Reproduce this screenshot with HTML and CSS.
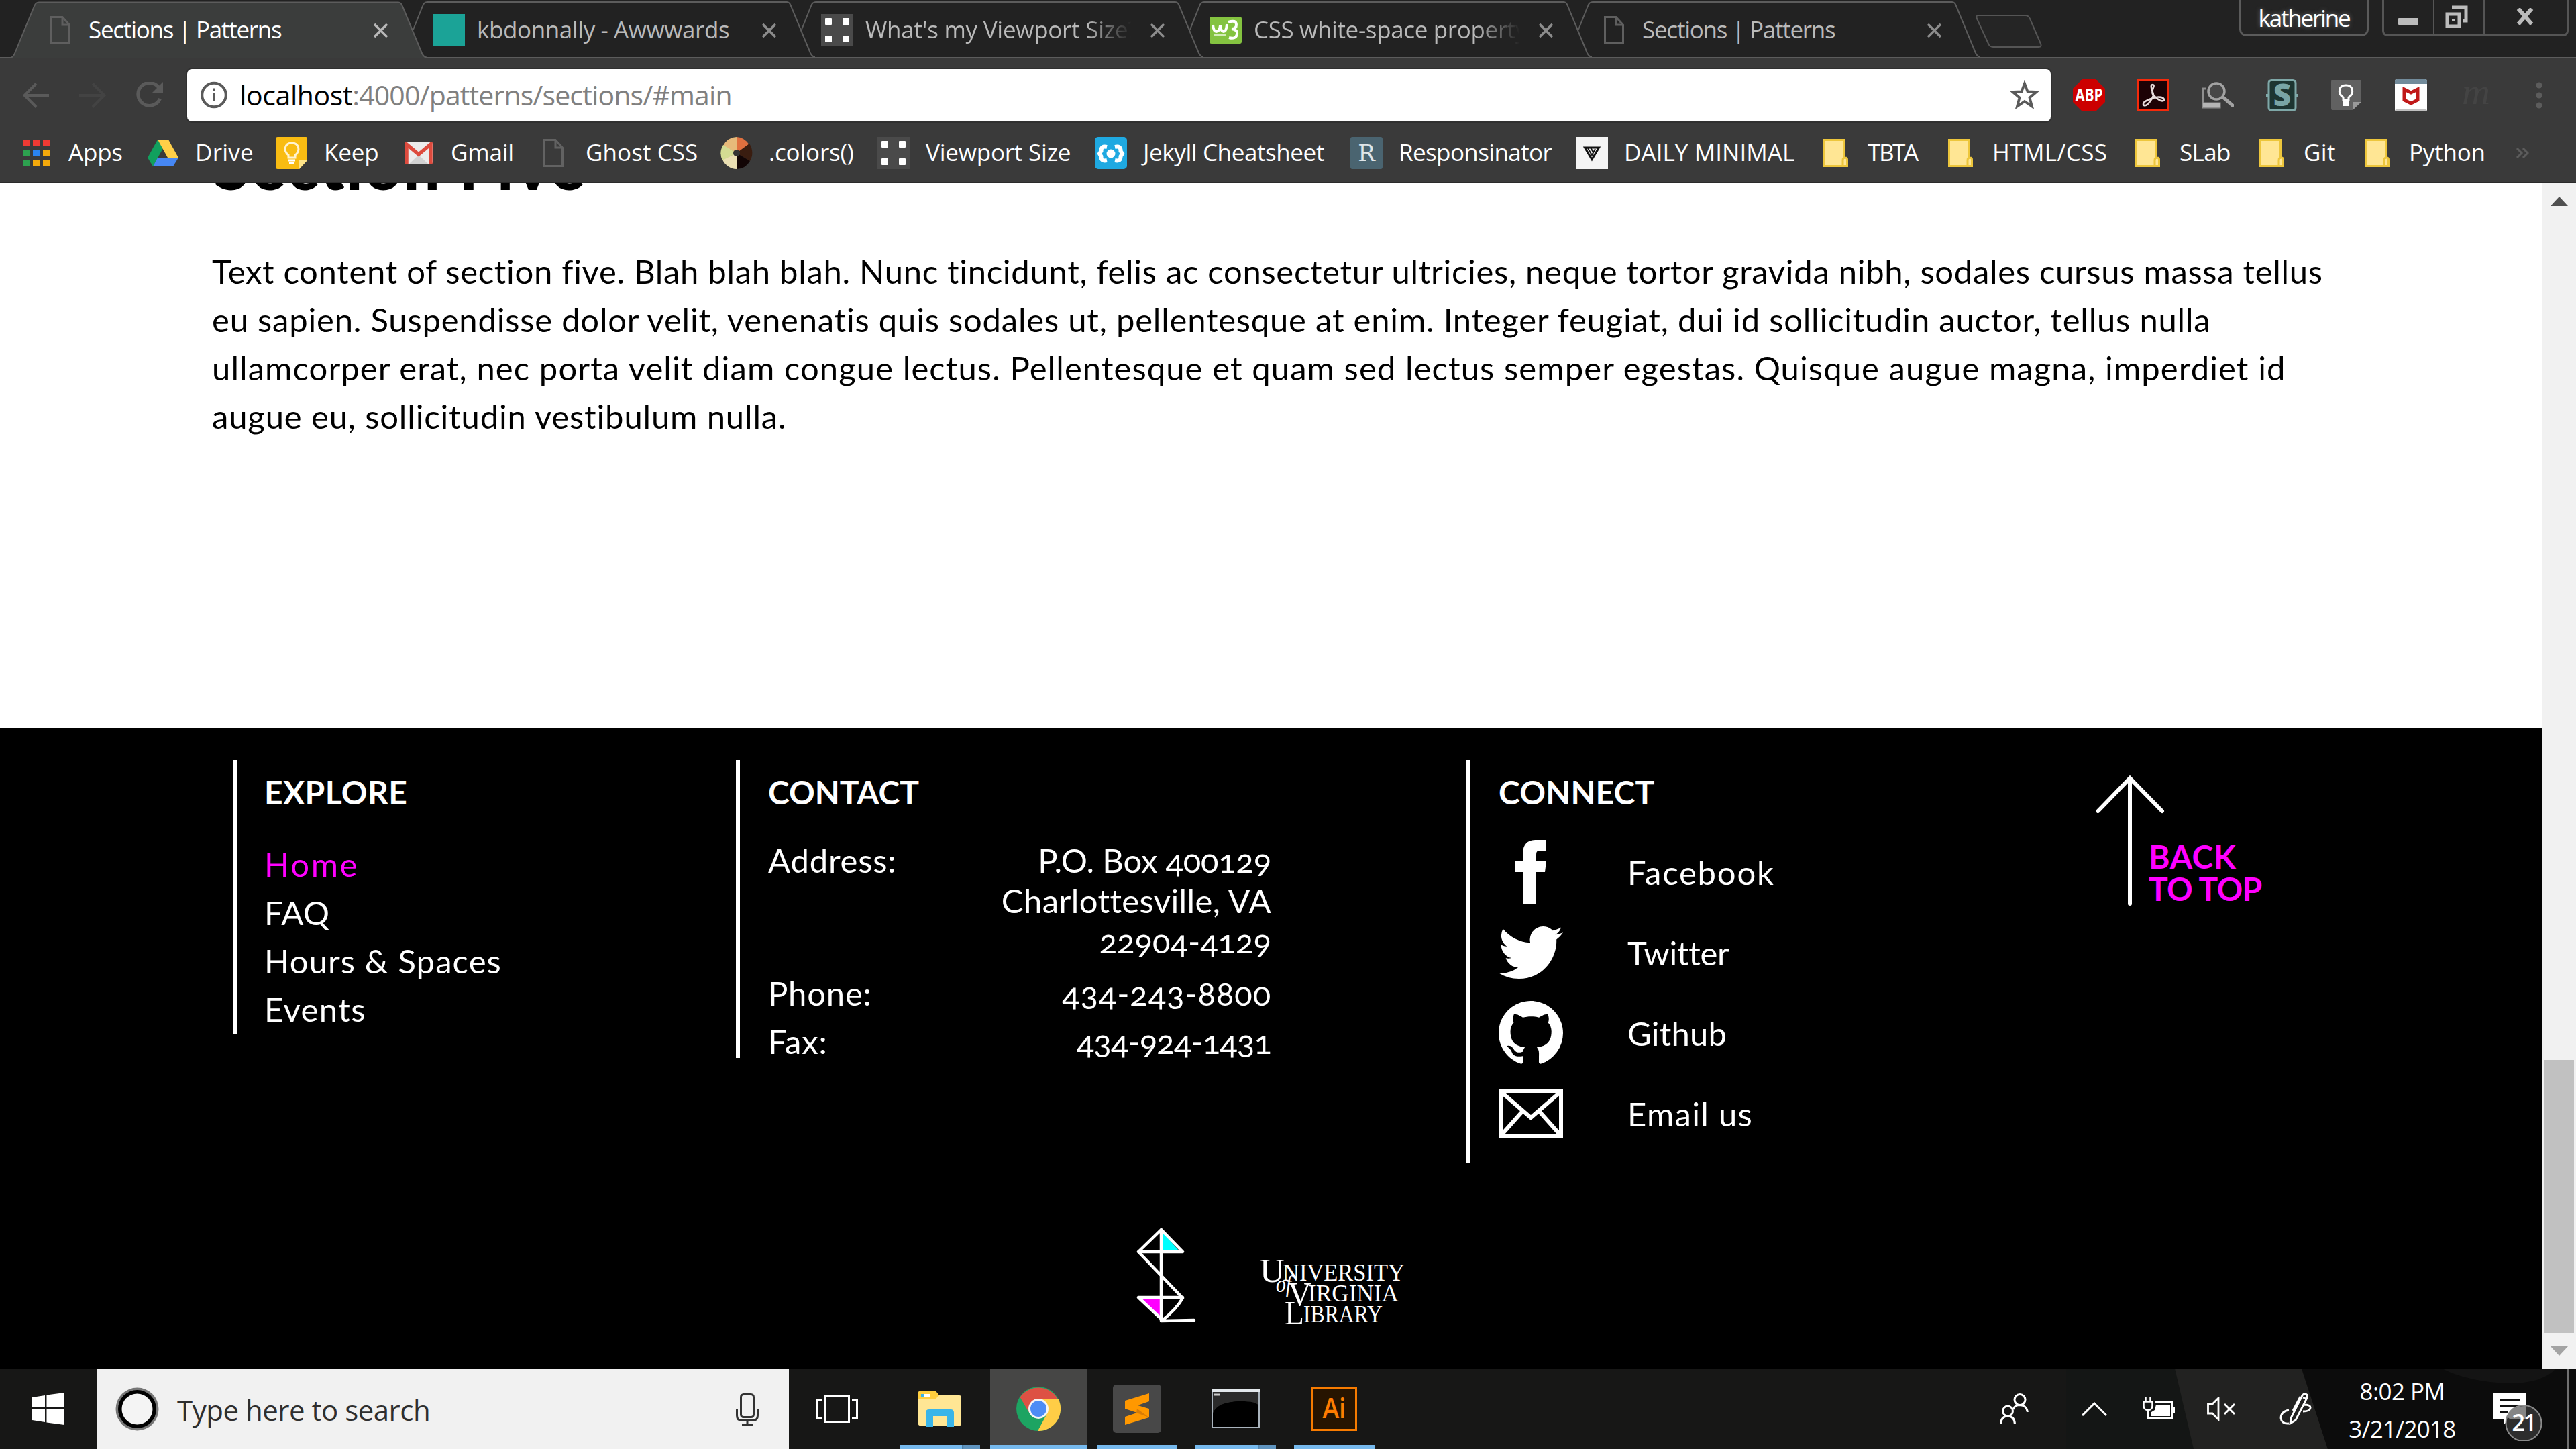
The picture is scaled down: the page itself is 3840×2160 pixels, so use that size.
FILE: index.html
```html
<!DOCTYPE html>
<html lang="en">
<head>
<meta charset="utf-8">
<title>Sections | Patterns</title>
<link rel="stylesheet" href="styles.css">
</head>
<body>
<svg class="defs" width="0" height="0">
  <symbol id="file" viewBox="0 0 30 42"><path d="M1.5 1.5H18L28.5 13V40.500H1.500ZM18 1.500V13H28.500" fill="none" stroke="currentColor" stroke-width="3"/></symbol>
  <symbol id="close" viewBox="0 0 23 23"><path d="M2 2L21 21M21 2L2 21" fill="none" stroke="currentColor" stroke-width="3.600"/></symbol>
  <symbol id="folder" viewBox="0 0 37 42"><path d="M1.500 1.500H31.500V28H33Q35.500 28 35.500 31V40.500H1.500Z" fill="#ffe694" stroke="#edc63c" stroke-width="3"/><path d="M29 40V32Q29 28 32 28" fill="none" stroke="#edc63c" stroke-width="3"/></symbol>
  <symbol id="viewport" viewBox="0 0 48 48"><rect width="48" height="48" fill="#4a4a4a"/><g fill="#fff"><rect x="6" y="6" width="10" height="10" rx="1"/><rect x="32" y="6" width="10" height="10" rx="1"/><rect x="6" y="32" width="10" height="10" rx="1"/><rect x="32" y="32" width="10" height="10" rx="1"/></g></symbol>
  <symbol id="tab" viewBox="0 0 619 86"><path d="M20 44L34 9Q36 3 41 3H577Q581 3 583 9L612 79Q615 85 619 85" fill="none" stroke="#5c5c5c" stroke-width="2"/></symbol>
  <symbol id="tab-active" viewBox="0 0 619 86"><path d="M0 86Q3 84 5 79L34 9Q36 3 41 3H577Q581 3 583 9L612 79Q615 86 619 86Z" fill="#3b3d3c"/><path d="M0 85Q3 84 5 79L34 9Q36 3 41 3H577Q581 3 583 9L612 79Q615 85 619 85" fill="none" stroke="#5c5c5c" stroke-width="2"/></symbol>
</svg>

<header class="chrome">
  <div class="tabs">
    <div class="tab tab--active"><svg class="tab__shape"><use href="#tab-active"/></svg><span class="slot"><svg width="30" height="42"><use href="#file"/></svg></span><span class="tab__title">Sections | Patterns</span><svg class="tab__close" width="23" height="23"><use href="#close"/></svg></div>
    <div class="tab"><svg class="tab__shape"><use href="#tab"/></svg><span class="slot slot--teal"></span><span class="tab__title">kbdonnally - Awwwards</span><svg class="tab__close" width="23" height="23"><use href="#close"/></svg></div>
    <div class="tab"><svg class="tab__shape"><use href="#tab"/></svg><span class="slot"><svg width="48" height="48"><use href="#viewport"/></svg></span><span class="tab__title tab__title--fade">What's my Viewport Size?</span><svg class="tab__close" width="23" height="23"><use href="#close"/></svg></div>
    <div class="tab"><svg class="tab__shape"><use href="#tab"/></svg><span class="slot"><svg width="48" height="40" viewBox="0 0 48 40"><rect width="48" height="40" rx="3" fill="#84c340"/><path d="M5 12Q6 22 10 22Q15 22 16 13Q17 22 21 22Q25 22 26 11M28 8Q40 4 40 12Q40 18 33 18Q42 19 41 26Q39 34 29 31" fill="none" stroke="#fff" stroke-width="4"/><path d="M7 27H25" stroke="#d4ecb9" stroke-width="3" stroke-dasharray="2 1"/></svg></span><span class="tab__title tab__title--fade">CSS white-space property</span><svg class="tab__close" width="23" height="23"><use href="#close"/></svg></div>
    <div class="tab"><svg class="tab__shape"><use href="#tab"/></svg><span class="slot"><svg width="30" height="42"><use href="#file"/></svg></span><span class="tab__title">Sections | Patterns</span><svg class="tab__close" width="23" height="23"><use href="#close"/></svg></div>
    <svg class="newtab" width="99" height="50" viewBox="0 0 99 50"><path d="M4 1H74Q79 1 81 6L97 43Q99 48 94 48H26Q21 48 19 43L2 6Q0 1 4 1Z" fill="#252525" stroke="#555" stroke-width="2"/></svg>
    <div class="profile">katherine</div>
    <div class="controls">
      <span class="controls__btn"><svg width="30" height="10"><rect width="30" height="10" rx="1" fill="#bcbcbc"/></svg></span>
      <span class="controls__btn"><svg width="34" height="34" viewBox="0 0 34 34"><path d="M10 3H31V23H27" fill="none" stroke="#bcbcbc" stroke-width="5"/><rect x="3" y="13" width="18" height="18" fill="none" stroke="#bcbcbc" stroke-width="5"/><rect x="10" y="20" width="4" height="4" fill="#bcbcbc"/></svg></span>
      <span class="controls__btn"><svg width="28" height="25" viewBox="0 0 28 25"><path d="M4 1L24 24M24 1L4 24" stroke="#bcbcbc" stroke-width="6"/></svg></span>
    </div>
  </div>

  <div class="toolbar">
    <svg class="nav-back" width="40" height="38" viewBox="0 0 40 38"><path d="M39 19H3M20 1.500L2.500 19L20 36.500" fill="none" stroke="#5a5a5a" stroke-width="4"/></svg>
    <svg class="nav-fwd" width="40" height="38" viewBox="0 0 40 38"><path d="M0 19H37M20 1.500L37.500 19L20 36.500" fill="none" stroke="#434343" stroke-width="4"/></svg>
    <svg class="nav-reload" width="41" height="40" viewBox="0 0 41 40"><path d="M35 9A17 17 0 1 0 36.500 25" fill="none" stroke="#5a5a5a" stroke-width="5"/><path d="M41 0V17H24Z" fill="#5a5a5a"/></svg>
    <div class="address">
      <svg width="40" height="41" viewBox="0 0 40 41"><circle cx="20" cy="20.500" r="17.800" fill="none" stroke="#5a5a5a" stroke-width="4"/><path d="M20 17.500V30M20 10.500V14.500" stroke="#5a5a5a" stroke-width="4"/></svg>
      <span class="address__url"><span class="address__host">localhost</span>:4000/patterns/sections/#main</span>
      <svg width="44" height="43" viewBox="0 0 44 43"><path d="M22 4.500L26.500 16.500L39.500 17L29.500 25.500L33 38.500L22 31L11 38.500L14.500 25.500L4.500 17L17.500 16.500Z" fill="none" stroke="#5a5a5a" stroke-width="3.800"/></svg>
    </div>
    <div class="extensions">
      <svg width="48" height="48" viewBox="0 0 48 48"><path d="M14 0H34L48 14V34L34 48H14L0 34V14Z" fill="#c00"/><text x="24" y="33" class="ic ic--abp" textLength="41" lengthAdjust="spacingAndGlyphs">ABP</text></svg>
      <svg width="48" height="48" viewBox="0 0 48 48"><rect x="1.500" y="1.500" width="45" height="45" fill="#1d0205" stroke="#f62a0b" stroke-width="3"/><path d="M23 8C17 8 25 22 24 24C22 31 14 41 10 39C6 35 14 31 24 28C32 25 41 27 40 31C37 35 28 29 23 22C20 16 28 9 23 8Z" fill="none" stroke="#e8dcdc" stroke-width="2.600"/></svg>
      <svg width="48" height="48" viewBox="0 0 48 48"><path d="M7 14H2V42H27V36H4" fill="none" stroke="#8e8e8e" stroke-width="3"/><path d="M2 36H27V42H2Z" fill="#b5b5b5"/><circle cx="22" cy="18" r="12" fill="#474747" stroke="#a2a2a2" stroke-width="3.500"/><path d="M32 27L46 39" stroke="#a2a2a2" stroke-width="5" stroke-linecap="round"/></svg>
      <svg width="48" height="48" viewBox="0 0 48 48"><rect x="4" y="1.500" width="40" height="45" rx="4" fill="#1d3531" stroke="#7fa8a8" stroke-width="3"/><path d="M0 24H5M43 24H48" stroke="#7fa8a8" stroke-width="4"/><text x="24" y="40" class="ic ic--s">S</text></svg>
      <svg width="48" height="48" viewBox="0 0 48 48"><path d="M3 1H43Q46 1 46 4V33L33 46H3Q1 46 1 43V4Q1 1 3 1Z" fill="#616161"/><path d="M33 46V34H46Z" fill="#9a9a9a"/><path d="M19 31V27C10 21 12 9 23 9C34 9 36 21 27 27V31Z" fill="none" stroke="#fff" stroke-width="3"/><path d="M18 34H28M19 38H27" stroke="#fff" stroke-width="4"/></svg>
      <svg width="48" height="48" viewBox="0 0 48 48"><rect width="48" height="48" rx="3" fill="#fff"/><path d="M0 3Q0 0 3 0H45Q48 0 48 3V7H0Z" fill="#728b9b"/><path d="M1 46H47" stroke="#c0c0c0" stroke-width="2"/><path d="M14 15L24 20L34 15V31L24 36L14 31Z" fill="none" stroke="#c01818" stroke-width="5"/></svg>
      <svg width="48" height="48" viewBox="0 0 48 48"><text x="4" y="37" class="ic ic--m" textLength="42" lengthAdjust="spacingAndGlyphs">m</text></svg>
      <svg class="menu-dots" width="10" height="40" viewBox="0 0 10 40"><g fill="#5c5c5c"><circle cx="5" cy="5" r="4.500"/><circle cx="5" cy="20" r="4.500"/><circle cx="5" cy="35" r="4.500"/></g></svg>
    </div>
  </div>

  <nav class="bookmarks">
    <a class="bm"><span class="slot"><svg width="40" height="40" viewBox="0 0 40 40"><g fill="#ef3a34"><rect width="10" height="10"/><rect x="15" width="10" height="10"/><rect x="30" width="10" height="10"/></g><rect y="15" width="10" height="10" fill="#2da14f"/><rect x="15" y="15" width="10" height="10" fill="#2a83f0"/><rect x="30" y="15" width="10" height="10" fill="#f3a90c"/><rect y="30" width="10" height="10" fill="#2da14f"/><rect x="15" y="30" width="10" height="10" fill="#f3a90c"/><rect x="30" y="30" width="10" height="10" fill="#f3a90c"/></svg></span><span class="bm__t">Apps</span></a>
    <a class="bm"><span class="slot"><svg width="46" height="40" viewBox="0 0 46 40"><path d="M15 0L23 13L8 40L0 27Z" fill="#11a05e"/><path d="M15 0H31L46 27H30Z" fill="#ffcf48"/><path d="M15 27H46L38 40H8Z" fill="#4687f4"/></svg></span><span class="bm__t">Drive</span></a>
    <a class="bm"><span class="slot"><svg width="48" height="48" viewBox="0 0 48 48"><path d="M3 0H45Q47 0 47 3V35L35 48H3Q0 48 0 45V3Q0 0 3 0Z" fill="#f9bc12"/><path d="M35 48V35H47Z" fill="#ffe48a"/><path d="M19 31V27C11 21 13 9 24 9C35 9 37 21 29 27V31Z" fill="none" stroke="#fff3d0" stroke-width="3"/><path d="M19 35H29M20 39H28" stroke="#fff" stroke-width="3"/></svg></span><span class="bm__t">Keep</span></a>
    <a class="bm"><span class="slot"><svg width="42" height="32" viewBox="0 0 42 32"><rect width="42" height="32" rx="3" fill="#ececec"/><path d="M7 32L21 19L35 32Z" fill="#d2d2d2"/><path d="M3 32V3L21 18L39 3V32" fill="none" stroke="#dd4b3e" stroke-width="5.500"/></svg></span><span class="bm__t">Gmail</span></a>
    <a class="bm"><span class="slot slot--dim"><svg width="30" height="42"><use href="#file"/></svg></span><span class="bm__t">Ghost CSS</span></a>
    <a class="bm"><span class="slot"><svg width="48" height="48" viewBox="0 0 48 48"><path d="M24 24V0A24 24 0 0 0 4 13Z" fill="#e7ba7a"/><path d="M24 24V0A24 24 0 0 1 43 12Z" fill="#e0703f"/><path d="M24 24L43 10A24 24 0 0 1 44 36Z" fill="#3a1d10"/><path d="M24 24L44 36A24 24 0 0 1 24 48Z" fill="#120505"/><path d="M24 24V48A24 24 0 0 1 3 34Z" fill="#eadfb3"/><path d="M24 24L3 35A24 24 0 0 1 4 12Z" fill="#d3dc92"/><circle cx="24" cy="24" r="5" fill="#333"/></svg></span><span class="bm__t">.colors()</span></a>
    <a class="bm"><span class="slot"><svg width="48" height="48"><use href="#viewport"/></svg></span><span class="bm__t">Viewport Size</span></a>
    <a class="bm"><span class="slot"><svg width="48" height="48" viewBox="0 0 48 48"><rect width="48" height="48" rx="5" fill="#1fa9e1"/><path d="M18 15Q9 13 9.500 21L7 25L9.500 29Q9 37 18 35M30 15Q39 13 38.500 21L41 25L38.500 29Q39 37 30 35" fill="none" stroke="#fff" stroke-width="6"/><circle cx="24" cy="25" r="6.500" fill="#fff"/></svg></span><span class="bm__t">Jekyll Cheatsheet</span></a>
    <a class="bm"><span class="slot"><svg width="48" height="48" viewBox="0 0 48 48"><rect width="48" height="48" rx="3" fill="#4a6470"/><text x="24" y="36" class="ic ic--r">R</text></svg></span><span class="bm__t">Responsinator</span></a>
    <a class="bm"><span class="slot"><svg width="48" height="48" viewBox="0 0 48 48"><rect width="48" height="48" fill="#f4f4f4"/><path d="M13.500 16H34.500L24 33.500Z" fill="none" stroke="#111" stroke-width="3"/><path d="M18 17L24 27L29 18M22 16L25.500 22" fill="none" stroke="#111" stroke-width="2"/></svg></span><span class="bm__t">DAILY MINIMAL</span></a>
    <a class="bm"><span class="slot"><svg width="37" height="42"><use href="#folder"/></svg></span><span class="bm__t">TBTA</span></a>
    <a class="bm"><span class="slot"><svg width="37" height="42"><use href="#folder"/></svg></span><span class="bm__t">HTML/CSS</span></a>
    <a class="bm"><span class="slot"><svg width="37" height="42"><use href="#folder"/></svg></span><span class="bm__t">SLab</span></a>
    <a class="bm"><span class="slot"><svg width="37" height="42"><use href="#folder"/></svg></span><span class="bm__t">Git</span></a>
    <a class="bm"><span class="slot"><svg width="37" height="42"><use href="#folder"/></svg></span><span class="bm__t">Python</span></a>
    <svg class="bm-more" width="20" height="16" viewBox="0 0 20 16"><path d="M2 1L9 8L2 15M11 1L18 8L11 15" fill="none" stroke="#5c5c5c" stroke-width="3"/></svg>
  </nav>
</header>

<div class="viewport">
  <main class="page">
    <section class="section">
      <h2>Section Five</h2>
      <p>
        <span class="line line--1">Text content of section five. Blah blah blah. Nunc tincidunt, felis ac consectetur ultricies, neque tortor gravida nibh, sodales cursus massa tellus</span>
        <span class="line line--2">eu sapien. Suspendisse dolor velit, venenatis quis sodales ut, pellentesque at enim. Integer feugiat, dui id sollicitudin auctor, tellus nulla</span>
        <span class="line line--3">ullamcorper erat, nec porta velit diam congue lectus. Pellentesque et quam sed lectus semper egestas. Quisque augue magna, imperdiet id</span>
        <span class="line line--4">augue eu, sollicitudin vestibulum nulla.</span>
      </p>
    </section>
    <footer class="footer">
      <div class="footer__cols">
        <div class="col col--explore">
          <h3>EXPLORE</h3>
          <ul class="links"><li class="links__current">Home</li><li>FAQ</li><li>Hours &amp; Spaces</li><li>Events</li></ul>
        </div>
        <div class="col col--contact">
          <h3>CONTACT</h3>
          <dl class="contact">
            <dt>Address:</dt><dd class="addr"><span>P.O. Box 400129</span><span>Charlottesville, VA</span><span>22904-4129</span></dd>
            <dt>Phone:</dt><dd class="phone">434-243-8800</dd>
            <dt>Fax:</dt><dd class="fax">434-924-1431</dd>
          </dl>
        </div>
        <div class="col col--connect">
          <h3>CONNECT</h3>
          <ul class="social">
            <li><span class="social__icon"><svg width="47" height="96" viewBox="0 0 47 96"><path d="M31 96H11V48H0V32H11V22C11 6 18 0 32 0H46V16H37C31 16 31 19 31 24V32H46L44 48H31Z" fill="#fff"/></svg></span><span>Facebook</span></li>
            <li><span class="social__icon"><svg width="96" height="96" viewBox="0 0 24 24"><path fill="#fff" d="M23.953 4.570a10 10 0 01-2.825.775 4.958 4.958 0 002.163-2.723c-.951.555-2.005.959-3.127 1.184a4.920 4.920 0 00-8.384 4.482C7.690 8.095 4.067 6.130 1.640 3.162a4.822 4.822 0 00-.666 2.475c0 1.710.870 3.213 2.188 4.096a4.904 4.904 0 01-2.228-.616v.060a4.923 4.923 0 003.946 4.827 4.996 4.996 0 01-2.212.085 4.936 4.936 0 004.604 3.417 9.867 9.867 0 01-6.102 2.105c-.390 0-.779-.023-1.170-.067a13.995 13.995 0 007.557 2.209c9.053 0 13.998-7.496 13.998-13.985 0-.210 0-.420-.015-.630A9.935 9.935 0 0024 4.590z"/></svg></span><span>Twitter</span></li>
            <li><span class="social__icon"><svg width="96" height="96" viewBox="0 0 16 16"><path fill="#fff" d="M8 0C3.580 0 0 3.580 0 8c0 3.540 2.290 6.530 5.470 7.590.4.070.550-.170.550-.380 0-.190-.010-.820-.010-1.490-2.010.370-2.530-.490-2.690-.940-.090-.230-.480-.940-.820-1.130-.280-.150-.680-.520-.010-.530.630-.010 1.080.580 1.230.820.720 1.210 1.870.870 2.330.660.070-.520.280-.870.510-1.070-1.780-.2-3.640-.890-3.640-3.950 0-.870.310-1.590.820-2.150-.080-.2-.360-1.020.080-2.120 0 0 .670-.210 2.200.820.640-.180 1.320-.270 2-.270s1.360.090 2 .270c1.530-1.040 2.200-.820 2.200-.820.440 1.100.160 1.920.080 2.120.510.560.820 1.270.820 2.150 0 3.070-1.870 3.750-3.650 3.950.290.250.540.730.540 1.480 0 1.070-.010 1.930-.010 2.200 0 .210.150.460.550.380A8.010 8.010 0 0016 8c0-4.420-3.580-8-8-8z"/></svg></span><span>Github</span></li>
            <li><span class="social__icon"><svg width="96" height="72" viewBox="0 0 96 72"><path d="M3 3H93V69H3ZM4 4L48 42L92 4M4 68L36 32M92 68L60 32" fill="none" stroke="#fff" stroke-width="6"/></svg></span><span>Email us</span></li>
          </ul>
        </div>
        <a class="totop"><svg width="102" height="194" viewBox="0 0 102 194"><path d="M50 191V5M2.500 53L50 4L98 53" fill="none" stroke="#fff" stroke-width="6" stroke-linecap="round"/></svg><span class="totop__label"><span>BACK</span><span>TO TOP</span></span></a>
      </div>
      <div class="logos">
        <svg width="100" height="150" viewBox="0 0 100 150"><path d="M43 8V36H68Z" fill="#0ff"/><path d="M11 107H40V137Z" fill="#f0f"/><path d="M41 4L7 37L73 106Q64 122 43 139L7 105H73M41 4L73 37H7M41 4V140L90 139" fill="none" stroke="#fff" stroke-width="4.500" stroke-linejoin="round" stroke-linecap="round"/></svg>
        <svg class="uva" width="220" height="110" viewBox="0 0 220 110" fill="#fff"><text x="2" y="44" font-size="50" textLength="37" lengthAdjust="spacingAndGlyphs">U</text><text x="36" y="42" font-size="35" textLength="182" lengthAdjust="spacingAndGlyphs">NIVERSITY</text><text x="26" y="59" font-size="36" font-style="italic" textLength="23" lengthAdjust="spacingAndGlyphs">of</text><text x="44" y="79" font-size="50" textLength="35" lengthAdjust="spacingAndGlyphs">V</text><text x="74" y="73" font-size="35" textLength="135" lengthAdjust="spacingAndGlyphs">IRGINIA</text><text x="39" y="107" font-size="50" textLength="29" lengthAdjust="spacingAndGlyphs">L</text><text x="67" y="104" font-size="35" textLength="118" lengthAdjust="spacingAndGlyphs">IBRARY</text></svg>
      </div>
    </footer>
  </main>
  <div class="scrollbar">
    <svg width="26" height="14" viewBox="0 0 26 14"><path d="M13 0L26 14H0Z" fill="#505050"/></svg>
    <div class="scrollbar__thumb"></div>
    <svg width="26" height="14" viewBox="0 0 26 14"><path d="M0 0H26L13 14Z" fill="#a3a3a3"/></svg>
  </div>
</div>

<div class="taskbar">
  <svg class="taskbar__bg" width="3840" height="120"><rect width="3840" height="120" fill="#171716"/><path d="M3080 0H3242L3270 120H3080Z" fill="#141615"/><path d="M3242 0H3431L3470 120H3270Z" fill="#222221"/><path d="M3431 0H3840V120H3470Z" fill="#0c0c0c"/><path d="M3640 0H3810Q3790 22 3740 22Q3680 20 3640 0Z" fill="#141414"/></svg>
  <div class="start"><svg width="48" height="48" viewBox="0 0 48 48"><path d="M0 7L19 4V22H0ZM21.500 3.500L48 0V22H21.500ZM0 24.500H19V44L0 41ZM21.500 24.500H48V48L21.500 44.500Z" fill="#fff"/></svg></div>
  <div class="search">
    <svg width="65" height="65" viewBox="0 0 65 65"><circle cx="32.500" cy="32.500" r="32" fill="#777"/><circle cx="32.500" cy="32.500" r="28.500" fill="#000"/><circle cx="32.500" cy="32.500" r="23" fill="#f4f4f4"/></svg>
    <span class="search__text">Type here to search</span>
    <svg width="34" height="48" viewBox="0 0 34 48"><g fill="none" stroke="#333" stroke-width="3"><rect x="7.500" y="1.500" width="19" height="34" rx="4"/><path d="M1.500 24V33Q1.500 40.500 9 40.500H25Q32.500 40.500 32.500 33V24M17 41V46M9 46.500H25"/></g></svg>
  </div>
  <div class="taskview"><svg width="62" height="42" viewBox="0 0 62 42"><g fill="none" stroke="#fff" stroke-width="3"><rect x="13.500" y="1.500" width="35" height="39"/><path d="M9 7.500H1.500V34.500H9M53 7.500H60.500V34.500H53"/></g></svg></div>
  <div class="apps">
    <div class="app app--multi"><svg width="64" height="54" viewBox="0 0 64 54"><path d="M0 3Q0 1 2 1H26L31 7H61Q64 7 64 10V50Q64 52 61 52H3Q0 52 0 50Z" fill="#ffe694"/><path d="M0 3Q0 1 2 1H26L31 7L26 12H0Z" fill="#ffce3e"/><rect x="4" y="5" width="14" height="4" fill="#fff"/><rect x="4" y="5" width="4" height="4" fill="#39b5e9"/><path d="M11 54V33Q11 28 16 28H48Q53 28 53 33V54H42V38H22V54Z" fill="#39b5e9"/></svg></div>
    <div class="app app--active"><svg width="66" height="66" viewBox="0 0 66 66"><circle cx="33" cy="33" r="33" fill="#1da462"/><path d="M33 33L5.500 16A33 33 0 0 1 61.500 18H33Z" fill="#dd5144"/><path d="M5.500 15.500L18.500 38L33 20Z" fill="#dd5144"/><path d="M33 18H62.500A33 33 0 0 1 32 66L46 40Z" fill="#ffcd46"/><circle cx="33" cy="33" r="15" fill="#f5f5f5"/><circle cx="33" cy="33" r="12" fill="#4d8cf5"/></svg></div>
    <div class="app"><svg width="72" height="72" viewBox="0 0 72 72"><rect width="72" height="72" rx="5" fill="#484848"/><path d="M54 13L18 24V36L36 42L18 48V60L54 49V36L37 31L54 25Z" fill="#ff9800"/><path d="M35 42L54 49L36 36Z" fill="#d97d06"/></svg></div>
    <div class="app app--multi"><svg width="72" height="58" viewBox="0 0 72 58"><rect x="1" y="1" width="70" height="56" fill="#000" stroke="#aab4bd" stroke-width="2"/><path d="M2 4H70V40Q66 16 40 18Q8 20 2 36Z" fill="#2b2b2b"/><path d="M2 36Q8 18 45 18Q66 18 70 24V56H2Z" fill="#000"/><rect width="72" height="4" fill="#e3e8ec"/><path d="M4 8H12" stroke="#ccc" stroke-width="3" stroke-dasharray="2 1"/></svg></div>
    <div class="app"><svg width="68" height="66" viewBox="0 0 68 66"><rect x="1.500" y="1.500" width="65" height="63" fill="#271400" stroke="#f77b00" stroke-width="3"/><text x="34" y="47" class="ic ic--ai" textLength="35" lengthAdjust="spacingAndGlyphs">Ai</text></svg></div>
  </div>
  <div class="tray">
    <span class="tray__i"><svg width="43" height="46" viewBox="0 0 43 46"><g fill="none" stroke="#fff" stroke-width="3"><circle cx="30" cy="9.500" r="8"/><path d="M20 24Q22 17.500 30 17.500Q40 18 41.500 28"/><circle cx="12" cy="26.500" r="7.500"/><path d="M1.500 46Q2 34 12 34Q22 34 22.500 46"/></g></svg></span>
    <span class="tray__i"><svg width="38" height="21" viewBox="0 0 38 21"><path d="M1 20L19 2L37 20" fill="none" stroke="#fff" stroke-width="3"/></svg></span>
    <span class="tray__i"><svg width="48" height="34" viewBox="0 0 48 34"><path d="M18 7.500H44.500V31.500H10" fill="none" stroke="#fff" stroke-width="3"/><path d="M20 11H41V28H13V22L18 19Z" fill="#fff"/><path d="M46.500 14V24" stroke="#fff" stroke-width="3"/><path d="M1.500 6.500H14.500V13Q14 19 8 19Q2 19 1.500 13ZM4.500 0V6M11.500 0V6M8 19V33" fill="none" stroke="#fff" stroke-width="2.500"/></svg></span>
    <span class="tray__i"><svg width="42" height="36" viewBox="0 0 42 36"><path d="M1.500 11H8L17 2V34L8 25H1.500ZM26 11L41 26M41 11L26 26" fill="none" stroke="#fff" stroke-width="2.800"/></svg></span>
    <span class="tray__i"><svg width="48" height="48" viewBox="0 0 48 48"><path d="M17 38L34 4Q37 0 41 3L41 8L24 41L16 46ZM20 27L31 6M35 7L41 10M36 18Q47 18 46 23Q45 28 35 28M14 26Q2 28 2 38Q3 47 14 46" fill="none" stroke="#fff" stroke-width="2.800"/></svg></span>
    <span class="clock"><span class="clock__time">8:02 PM</span><span class="clock__date">3/21/2018</span></span>
    <span class="tray__i notif"><svg width="72" height="72" viewBox="0 0 72 72"><path d="M0 0H48V39H24L16 47V39H0Z" fill="#fff"/><path d="M9 10.500H39M9 19.500H39M9 28.500H22" stroke="#111" stroke-width="3"/><circle cx="45" cy="45.500" r="26.500" fill="#2d2d2d" stroke="#8a8a8a" stroke-width="2"/><path d="M20 36Q24 22 45 20H48V39H24Z" fill="#858585"/><text x="45" y="57" class="ic ic--21">21</text></svg></span>
    <span class="desktop-line"></span>
  </div>
</div>
</body>
</html>
```
FILE: styles.css
```css
* { box-sizing: border-box; margin: 0; padding: 0; }
body { width: 3840px; height: 2160px; overflow: hidden; display: flex; flex-direction: column; background: #000; font-family: "Open Sans", "Liberation Sans", sans-serif; font-size: 35px; }
svg { display: block; flex: none; }
.defs { position: absolute; }
ul { list-style: none; }
.slot { width: 48px; height: 48px; flex: none; display: flex; align-items: center; justify-content: center; color: #5f5f5f; }
.slot--teal { background: #1ba397; }
.slot--dim { color: #626262; }

/* browser chrome */
.chrome { height: 273px; flex: none; background: #3a3a3a; border-bottom: 2px solid #2a2a2a; color: #fff; }
.tabs { height: 87px; display: flex; padding-left: 17px; background: #222; border-bottom: 2px solid #5c5c5c; }
.tab { position: relative; width: 579px; flex: none; height: 90px; display: flex; align-items: center; padding-left: 49px; color: #b9b9b9; }
.tab--active { z-index: 2; color: #fff; margin-bottom: -4px; }
.tab__shape { position: absolute; left: 0; top: 0; width: 619px; height: 86px; }
.tab--active .tab__shape { height: 87px; }
.tab .slot, .tab__title, .tab__close { position: relative; }
.tab__title { width: 397px; margin-left: 18px; line-height: 50px; top: -1px; white-space: nowrap; overflow: hidden; }
.tab__title--fade { -webkit-mask-image: linear-gradient(90deg, #000 330px, transparent 397px); mask-image: linear-gradient(90deg, #000 330px, transparent 397px); }
.tab__close { margin-left: 27px; color: #8c8c8c; }
.tab--active .tab__close { color: #b8b8b8; }
.tab:nth-child(1) .tab__title, .tab:nth-child(5) .tab__title { letter-spacing: -1.24px; }
.tab:nth-child(2) .tab__title { letter-spacing: -.4px; }
.tab:nth-child(3) .tab__title { letter-spacing: -.25px; }
.tab:nth-child(4) .tab__title { letter-spacing: -.35px; }
.newtab { margin: 22px 0 0 33px; }
.profile { width: 193px; height: 54px; margin-left: 294px; border: 3px solid #5b5b5b; border-top: 0; border-radius: 0 0 10px 10px; line-height: 53px; text-align: center; letter-spacing: -2.19px; background: #242424; text-shadow: 0 0 6px #777; }
.controls { width: 278px; height: 54px; margin-left: 20px; display: grid; grid-template-columns: 73px 75px 1fr; border: 3px solid #555; border-top: 0; border-radius: 0 0 8px 8px; }
.controls__btn { display: flex; align-items: center; justify-content: center; padding-bottom: 1px; padding-right: 2px; }
.controls__btn:first-child { padding-top: 14px; }
.controls__btn:nth-child(2) { padding-right: 8px; }
.controls__btn:last-child { padding-bottom: 3px; }
.controls__btn + .controls__btn { border-left: 2px solid #555; }
.toolbar { height: 109px; display: flex; align-items: center; padding-left: 34px; }
.nav-fwd { margin-left: 44px; }
.nav-reload { margin-left: 44px; }
.address { width: 2778px; height: 78px; margin-left: 36px; padding: 0 17px 0 20px; border-radius: 7px; background: #fff; box-shadow: 0 0 0 2px #303030; display: flex; align-items: center; }
.address__url { flex: 1; margin-left: 18px; font-size: 41px; line-height: 70px; color: #808080; letter-spacing: -.86px; padding-bottom: 2px; }
.address__host { color: #000; letter-spacing: -.39px; }
.extensions { display: flex; align-items: center; gap: 48px; margin-left: 33px; }
.menu-dots { margin-left: 18px; }
.bookmarks { height: 64px; display: grid; grid-template-columns: 189px 192px 189px 201px 273px 234px 324px 381px 336px 363px 186px 279px 185px 157px 231px 20px; align-items: center; padding-left: 30px; }
.bm { display: flex; align-items: center; white-space: nowrap; }
.bm__t { margin: -3px 0 0 24px; line-height: 50px; letter-spacing: -.2px; }
.bm:nth-child(2) .bm__t { letter-spacing: .25px; }
.bm:nth-child(5) .bm__t, .bm:nth-child(10) .bm__t { letter-spacing: .07px; }
.bm:nth-child(8) .bm__t { letter-spacing: -.4px; }
.bm:nth-child(9) .bm__t { letter-spacing: -.61px; }
.bm:nth-child(11) .bm__t { letter-spacing: -2.4px; }
.bm:nth-child(12) .bm__t, .bm:nth-child(14) .bm__t { letter-spacing: .42px; }
.bm:nth-child(13) .bm__t { letter-spacing: -.64px; }

/* letters that are part of small icons */
.ic { font-family: "Open Sans", sans-serif; text-anchor: middle; fill: #fff; }
.ic--abp { font-size: 26px; font-weight: 700; }
.ic--s { font-size: 46px; font-weight: 800; fill: #79a5a5; }
.ic--m { font-family: "Liberation Serif", serif; font-size: 54px; font-style: italic; fill: #444; text-anchor: start; }
.ic--r { font-family: "DejaVu Serif", serif; font-size: 34px; fill: #dfe5e8; }
.ic--ai { font-size: 42px; font-weight: 600; fill: #ff7c00; }
.ic--21 { font-size: 34px; font-weight: 600; letter-spacing: -2px; }

/* page */
.viewport { height: 1767px; flex: none; display: flex; }
.page { width: 3789px; overflow: hidden; font-family: Lato, "Liberation Sans", sans-serif; font-size: 49px; font-feature-settings: "onum"; }
.section { height: 812px; padding-left: 316px; background: #fff; color: #000; display: flow-root; }
.section h2 { margin: -75px 0 74px 3px; font-size: 96px; line-height: 96px; font-weight: 900; letter-spacing: 2.54px; }
.line { display: block; line-height: 72px; white-space: nowrap; }
.line--1 { letter-spacing: .69px; }
.line--2 { letter-spacing: .78px; }
.line--3 { letter-spacing: 1.08px; }
.line--4 { letter-spacing: .84px; }
.footer { height: 955px; padding: 48px 0 0 347px; background: #000; color: #fff; }
.footer__cols { height: 600px; display: grid; grid-template-columns: 750px 1089px 939px 1fr; align-items: start; }
.col { border-left: 6px solid #fff; padding-left: 42px; }
.col h3 { padding-top: 12px; font-size: 48px; line-height: 72px; font-weight: 700; margin-bottom: 35px; }
.col--explore { height: 408px; padding-left: 41px; }
.col--contact { height: 444px; }
.col--connect { height: 600px; }
.col--explore h3 { letter-spacing: .4px; }
.col--connect h3 { margin-bottom: 23px; letter-spacing: .2px; }
.links li { line-height: 72px; letter-spacing: 1.1px; }
.links__current { color: #f0f; }
.links li:nth-child(1) { letter-spacing: 2.6px; }
.links li:nth-child(2) { letter-spacing: .3px; }
.links li:nth-child(4) { letter-spacing: 1.4px; }
.contact { width: 750px; display: grid; grid-template-columns: auto 1fr; line-height: 60px; letter-spacing: .8px; }
.contact dt:nth-of-type(2) { margin-top: 18px; }
.contact dt:nth-of-type(3) { margin-top: 12px; }
.contact dd { text-align: right; }
.addr span { display: block; letter-spacing: -.2px; }
.addr span:nth-child(2) { letter-spacing: .4px; }
.addr span:nth-child(3) { letter-spacing: 0; }
.phone { margin-top: 18px; letter-spacing: .9px; }
.fax { margin-top: 12px; letter-spacing: -.9px; }
.social li { height: 120px; display: flex; align-items: center; letter-spacing: 1.8px; }
.social__icon { width: 96px; margin-right: 96px; height: 96px; display: flex; align-items: center; justify-content: center; }
.social li:nth-child(2) { letter-spacing: -.3px; }
.social li:nth-child(3) { letter-spacing: .2px; }
.social li:nth-child(4) { letter-spacing: 1.3px; }
.totop { display: flex; align-items: flex-end; padding-top: 23px; color: #f0f; font-size: 48px; font-weight: 700; line-height: 48px; }
.totop__label { display: flex; flex-direction: column; margin: 0 0 1px -24px; }
.totop__label span:nth-child(1) { letter-spacing: .63px; }
.totop__label span:nth-child(2) { letter-spacing: -.71px; }
.logos { display: flex; align-items: flex-start; margin: 96px 0 0 1343px; }
.uva { margin: 38px 0 0 86px; font-family: "Liberation Serif", serif; font-feature-settings: normal; }

/* scrollbar */
.scrollbar { width: 51px; background: #f1f1f1; display: flex; flex-direction: column; align-items: center; padding: 20px 0 19px; }
.scrollbar__thumb { width: 45px; height: 407px; margin: auto 0 20px; background: #c1c1c1; }

/* taskbar */
.taskbar { position: relative; height: 120px; flex: none; display: flex; color: #fff; }
.taskbar > * { position: relative; }
.taskbar .taskbar__bg { position: absolute; left: 0; top: 0; }
.start, .taskview { width: 144px; display: flex; align-items: center; justify-content: center; }
.search { width: 1032px; background: #f1f1f1; border-top: 1px solid #aaa; display: flex; align-items: center; padding: 0 45px 0 28px; color: #2e2e2e; }
.search__text { flex: 1; margin-left: 27px; font-size: 42px; letter-spacing: -.49px; padding-top: 1px; }
.apps { display: flex; gap: 3px; margin-left: 9px; }
.app { width: 144px; display: flex; align-items: center; justify-content: center; background: linear-gradient(#76b9ed, #76b9ed) 12px 114px / 120px 6px no-repeat; }
.app--multi { background: linear-gradient(90deg, #76b9ed 93px, #4b7ba0 93px, #5f94bf 96px) 12px 114px / 120px 6px no-repeat; }
.app--active { background: linear-gradient(#76b9ed, #76b9ed) 0 114px / 144px 6px no-repeat, #464645; }
.tray { margin-left: auto; width: 898px; display: grid; grid-template-columns: 120px 120px 72px 114px 108px 212px 106px 32px 14px; }
.tray__i { display: flex; align-items: center; justify-content: center; }
.clock { display: flex; flex-direction: column; align-items: center; line-height: 56px; padding: 6px 2px 0 0; letter-spacing: -.56px; }
.clock__date { letter-spacing: -.72px; }
.notif { align-items: flex-start; justify-content: flex-start; padding: 36px 0 0 29px; }
.desktop-line { grid-column: 9; width: 3px; background: #707070; }
```
